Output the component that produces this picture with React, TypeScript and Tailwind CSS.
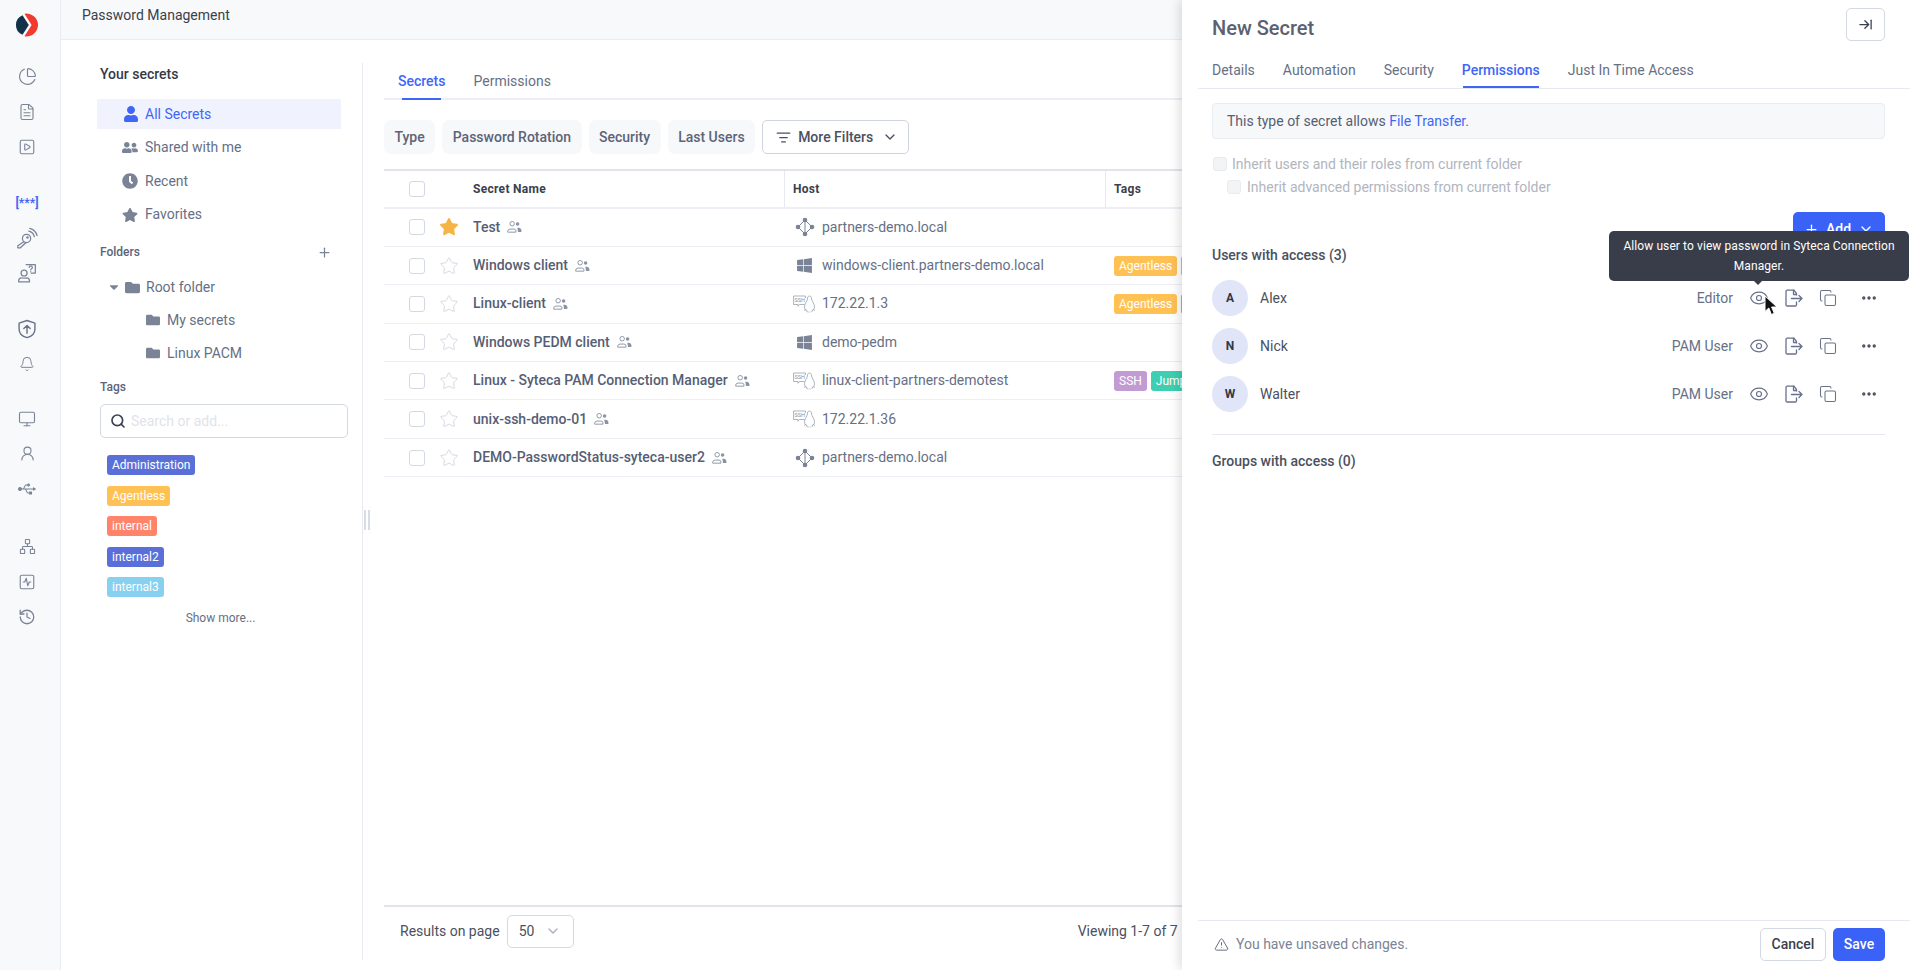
import React from 'react';
import {
  ArrowRightToLine,
  Bell,
  ChevronDown,
  Copy,
  Ellipsis,
  Eye,
  FileText,
  History,
  ListFilter,
  Monitor,
  Network,
  PieChart,
  Plus,
  Search,
  SquareActivity,
  SquarePlay,
  Star,
  TriangleAlert,
  UserRound,
} from 'lucide-react';
import { FaCaretDown, FaClock, FaFolder, FaStar, FaUser, FaUserFriends, FaUsb, FaWindows } from 'react-icons/fa';

function Logo() {
  return (
    <svg width="24" height="24" viewBox="0 0 24 24">
      <path d="M7.500 2.200A10.600 10.600 0 0 0 7.500 21.800L13.800 12Z" fill="#12324a" />
      <path d="M9.500.8A11.400 11.400 0 1 1 9.500 23.200L16.600 12Z" fill="#f23b2f" />
    </svg>
  );
}

function KeySignal() {
  return (
    <svg width="22" height="22" viewBox="0 0 24 24" fill="none" stroke="#7b8496" strokeWidth="1.400" strokeLinecap="round" strokeLinejoin="round">
      <circle cx="11.500" cy="12.500" r="4.500" />
      <path d="M8.500 16 2 20.500v2.200h2.800L11 17" />
      <circle cx="12.500" cy="11.500" r=".7" />
      <path d="M14 4.500A8 8 0 0 1 20 10.500" />
      <path d="M15 1.500A11 11 0 0 1 23 9.500" />
    </svg>
  );
}

function UserHelp() {
  return (
    <svg width="20" height="20" viewBox="0 0 24 24" fill="none" stroke="#7b8496" strokeWidth="1.500" strokeLinecap="round" strokeLinejoin="round">
      <circle cx="8.500" cy="12" r="3.600" />
      <path d="M2 22.500v-1.200a3.500 3.500 0 0 1 3.500-3.300h6a3.500 3.500 0 0 1 3.500 3.300v1.200z" />
      <path d="M11 2h11v10h-5" />
      <path d="M14.600 5.200a1.900 1.900 0 1 1 2.600 2c-.5.3-.7.5-.7 1" />
      <path d="M16.500 10.400v.1" />
    </svg>
  );
}

function ShieldUp() {
  return (
    <svg width="20" height="20" viewBox="0 0 24 24" fill="none" stroke="#68728a" strokeWidth="1.700" strokeLinecap="round" strokeLinejoin="round">
      <path d="M12 1.800 21.500 5v7c0 5.200-4 9-9.500 10.400C6.500 21 2.500 17.200 2.500 12V5z" />
      <path d="M12 17V8M8.200 11.500 12 7.800l3.800 3.700" />
    </svg>
  );
}

function PeopleLock({ className = '' }: { className?: string }) {
  return (
    <svg className={className} width="15" height="14" viewBox="0 0 16 14" fill="none" stroke="#8a92a3" strokeWidth="1">
      <circle cx="5.500" cy="3.500" r="2.400" />
      <path d="M.7 12.500v-1a2.600 2.600 0 0 1 2.600-2.300h3.900c1 0 1.800.4 2.300 1.200V12.500z" />
      <circle cx="11.300" cy="3.700" r="1.900" fill="#8a92a3" stroke="none" />
      <path d="M11 7.800h1.500c1.500 0 2.800 1.200 2.800 2.700v1.800h-3.500" fill="#8a92a3" stroke="none" />
    </svg>
  );
}

function DomainIcon() {
  return (
    <svg width="20" height="20" viewBox="0 0 20 20" fill="#7b8496" stroke="#7b8496">
      <path d="M10 3 3 10l7 7 7-7zM10 3v14" fill="none" strokeWidth="1" />
      <circle cx="10" cy="3" r="2.300" stroke="none" />
      <circle cx="3" cy="10" r="2.300" stroke="none" />
      <circle cx="17" cy="10" r="2.300" stroke="none" />
      <circle cx="10" cy="17" r="2.300" stroke="none" />
    </svg>
  );
}

function SshLinuxIcon() {
  return (
    <svg width="23" height="18" viewBox="0 0 23 18" fill="none" stroke="#8a92a3" strokeWidth=".7" strokeLinejoin="round">
      <path d="M11.500 9.500H6.500L5 11.200V9.500H.6V1h11.800v2" />
      <text x="1.500" y="7" fontSize="5.500" fill="#8a92a3" stroke="none" fontFamily="Roboto, sans-serif">SSH</text>
      <path d="M16.500 1c-1.500 0-2.100 1.400-2.100 3 0 2-2.900 4.500-2.900 7.800 0 1.200.4 2.300 1 3M16.500 1c1.500 0 2.100 1.400 2.100 3 0 2 2.900 4.500 2.900 7.800 0 1.200-.4 2.300-1 3" />
      <path d="M11 15.800c.8-.9 1.600-1.300 2.500-.9l.6 2M22 15.800c-.8-.9-1.600-1.300-2.500-.9l-.6 2" />
      <path d="M14.500 17h4" strokeDasharray="1 1" />
    </svg>
  );
}

function FileExport() {
  return (
    <svg width="19" height="19" viewBox="0 0 19 19" fill="none" stroke="#68728a" strokeWidth="1.300" strokeLinecap="round" strokeLinejoin="round">
      <path d="M12.500 6V4.500L10 1.200H3.200A1.200 1.200 0 0 0 2 2.400v13.400A1.200 1.200 0 0 0 3.200 17h8a1.200 1.200 0 0 0 1.300-1.200V13" />
      <path d="M9.500 1.200V5.500h3" />
      <path d="M7.500 9.500H18M15 6.500l3 3-3 3" />
    </svg>
  );
}

function Cursor() {
  return (
    <svg className="absolute left-[582px] top-[295px]" width="14" height="22" viewBox="0 0 14 22">
      <path d="M1 1v15.500l3.800-3.500 2.600 6.500 2.900-1.200-2.700-6.300H13z" fill="#111" stroke="#fff" strokeWidth="1" />
    </svg>
  );
}

const railGroups = [
  { top: 'mt-[22px]', items: [<PieChart key="a" size={19} strokeWidth={1.500} />, <FileText key="b" size={18} strokeWidth={1.500} />, <SquarePlay key="c" size={18} strokeWidth={1.500} />] },
  { top: 'mt-[21px]', items: [<span key="a" className="text-[12px] font-bold text-[#3f66f7]">[***]</span>, <KeySignal key="b" />, <UserHelp key="c" />] },
  { top: 'mt-[21px]', items: [<ShieldUp key="a" />, <Bell key="b" size={16} strokeWidth={1.500} />] },
  { top: 'mt-[20px]', items: [<Monitor key="a" size={18} strokeWidth={1.500} />, <UserRound key="b" size={17} strokeWidth={1.500} />, <FaUsb key="c" size={18} />] },
  { top: 'mt-[23px]', items: [<Network key="a" size={17} strokeWidth={1.500} />, <SquareActivity key="b" size={18} strokeWidth={1.500} />, <History key="c" size={18} strokeWidth={1.700} />] },
];

const pills = [
  { label: 'Administration', bg: 'bg-[#5a70d8]' },
  { label: 'Agentless', bg: 'bg-[#ffc154]' },
  { label: 'internal', bg: 'bg-[#ff8469]' },
  { label: 'internal2', bg: 'bg-[#5a70d8]' },
  { label: 'internal3', bg: 'bg-[#88d0f0]' },
];

type Kind = 'domain' | 'windows' | 'ssh';

// the second tag of some rows sits under the panel, only its edge shows
const rows: { name: string; host: string; kind: Kind; tags?: { label: string; bg: string }[]; fav?: boolean }[] = [
  { name: 'Test', host: 'partners-demo.local', kind: 'domain', fav: true },
  { name: 'Windows client', host: 'windows-client.partners-demo.local', kind: 'windows', tags: [{ label: 'Agentless', bg: 'bg-[#ffc154]' }, { label: '', bg: 'w-10 bg-[#88d0f0]' }] },
  { name: 'Linux-client', host: '172.22.1.3', kind: 'ssh', tags: [{ label: 'Agentless', bg: 'bg-[#ffc154]' }, { label: '', bg: 'w-10 bg-[#c39bd3]' }] },
  { name: 'Windows PEDM client', host: 'demo-pedm', kind: 'windows' },
  { name: 'Linux - Syteca PAM Connection Manager', host: 'linux-client-partners-demotest', kind: 'ssh', tags: [{ label: 'SSH', bg: 'bg-[#c39bd3]' }, { label: 'Jump', bg: 'bg-[#3ecfb2]' }] },
  { name: 'unix-ssh-demo-01', host: '172.22.1.36', kind: 'ssh' },
  { name: 'DEMO-PasswordStatus-syteca-user2', host: 'partners-demo.local', kind: 'domain' },
];

const users = [
  { initial: 'A', name: 'Alex', role: 'Editor' },
  { initial: 'N', name: 'Nick', role: 'PAM User' },
  { initial: 'W', name: 'Walter', role: 'PAM User' },
];

function Checkbox({ className = '' }: { className?: string }) {
  return <span className={`block h-4 w-4 shrink-0 rounded-[3px] border border-[#d3d8e2] bg-white ${className}`} />;
}

function HostIcon({ kind }: { kind: Kind }) {
  if (kind === 'domain') return <DomainIcon />;
  if (kind === 'windows') return <FaWindows size={17} color="#7b8496" />;
  return <SshLinuxIcon />;
}

function SidePanel() {
  const nav = [
    { label: 'Shared with me', icon: <FaUserFriends size={17} /> },
    { label: 'Recent', icon: <FaClock size={16} /> },
    { label: 'Favorites', icon: <FaStar size={16} /> },
  ];
  return (
    <aside className="relative mt-[23px] mb-[10px] w-[302px] shrink-0 border-r border-[#e6e9ef] pl-9 pr-[14px]">
      <div className="ml-[3px] flex h-[22px] items-center text-[14px] font-medium text-[#353a47]">Your secrets</div>
      <div className="mt-[14px] flex flex-col gap-[3.500px]">
        <div className="flex h-[30px] w-[244px] items-center gap-[6px] bg-[#f0f3fe] pl-[26px] text-[14px] text-[#3f66f7]">
          <FaUser size={16} />
          <span>All Secrets</span>
        </div>
        {nav.map((item) => (
          <div key={item.label} className="flex h-[30px] items-center gap-[7px] pl-[25px] text-[14px] text-[#667085]">
            <span className="flex w-4 justify-center text-[#7b8496]">{item.icon}</span>
            <span>{item.label}</span>
          </div>
        ))}
      </div>
      <div className="ml-[3px] mt-[12.500px] flex h-5 w-[232px] items-center justify-between text-[12px] font-medium text-[#5c6478]">
        <span>Folders</span>
        <Plus size={15} color="#7b8496" />
      </div>
      <div className="mt-[8.500px] flex flex-col text-[14px] text-[#667085]">
        <div className="flex h-[33px] items-center pl-[10px]">
          <FaCaretDown size={14} color="#7b8496" />
          <FaFolder size={15} color="#7b8496" className="ml-[4px]" />
          <span className="ml-[6px]">Root folder</span>
        </div>
        <div className="flex h-[33px] items-center pl-[49px]">
          <FaFolder size={14} color="#7b8496" />
          <span className="ml-[7px]">My secrets</span>
        </div>
        <div className="flex h-[33px] items-center pl-[49px]">
          <FaFolder size={14} color="#7b8496" />
          <span className="ml-[7px]">Linux PACM</span>
        </div>
      </div>
      <div className="ml-[3px] mt-[7.500px] flex h-5 items-center text-[12px] font-medium text-[#5c6478]">Tags</div>
      <div className="ml-[3px] mt-[7px] flex h-[34px] w-[248px] items-center gap-[5px] rounded-[5px] border border-[#d3d8e2] pl-[9px] text-[14px] text-[#dfe3ea]">
        <Search size={16} color="#3b4252" strokeWidth={2.500} />
        <span>Search or add...</span>
      </div>
      <div className="ml-[10px] mt-[17px] flex flex-col items-start gap-[10.500px]">
        {pills.map((pill) => (
          <span key={pill.label} className={`flex h-5 items-center rounded-[3px] px-[5px] text-[12px] text-white ${pill.bg}`}>
            {pill.label}
          </span>
        ))}
      </div>
      <div className="flex h-10 w-[244px] items-center justify-center pl-[3px] pt-[1px] text-[12px] text-[#667085]">Show more...</div>
      <span className="absolute right-[-8px] top-[447px] flex h-[20px] gap-[2px]">
        <span className="w-[2px] bg-[#d8dce4]" />
        <span className="w-[2px] bg-[#d8dce4]" />
      </span>
    </aside>
  );
}

function SecretsTable() {
  return (
    <div className="mt-[15px] flex-1 border-t-2 border-[#e0e3ea]">
      <div className="flex h-[37.500px] items-stretch border-b-2 border-[#eceef3] text-[12px] font-bold tracking-[0.3px] text-[#3a3f4c]">
        <div className="flex w-[400px] items-center pl-[25px]">
          <Checkbox />
          <span className="ml-[48px]">Secret Name</span>
        </div>
        <div className="flex w-[321px] items-center border-l border-[#e6e9ef] pl-[8px]">Host</div>
        <div className="flex flex-1 items-center border-l border-[#e6e9ef] pl-[8px]">Tags</div>
      </div>
      {rows.map((row) => (
        <div key={row.name} className="flex h-[38.400px] items-center border-b border-[#eceef3] text-[14px]">
          <div className="flex w-[400px] items-center pl-[25px]">
            <Checkbox />
            {row.fav ? (
              <Star size={20} className="ml-[14px]" fill="#f5b544" stroke="#f5b544" strokeWidth={1.500} />
            ) : (
              <Star size={20} className="ml-[14px]" stroke="#d6dae3" strokeWidth={1.200} />
            )}
            <span className="ml-[14px] font-medium text-[#565e74]">{row.name}</span>
            <PeopleLock className="ml-[7px]" />
          </div>
          <div className="flex w-[321px] items-center pl-[9px] text-[#667085]">
            <span className="flex w-[23px] justify-center">
              <HostIcon kind={row.kind} />
            </span>
            <span className="ml-[6px]">{row.host}</span>
          </div>
          <div className="flex items-center gap-[4px] pl-[9px]">
            {row.tags?.map((tag, i) => (
              <span key={i} className={`flex h-5 items-center rounded-[3px] px-[5px] text-[12px] text-white ${tag.bg}`}>
                {tag.label}
              </span>
            ))}
          </div>
        </div>
      ))}
    </div>
  );
}

function MainPane() {
  const chips = ['Type', 'Password Rotation', 'Security', 'Last Users'];
  return (
    <main className="ml-[21px] mt-[23px] mb-[10px] flex min-w-0 flex-1 flex-col">
      <div className="flex h-[37px] gap-[28px] border-b-2 border-[#eceef3] pl-[14px] text-[14px]">
        <div className="relative flex h-[36px] items-center font-medium text-[#3f66f7]">
          Secrets
          <span className="absolute inset-x-[4px] bottom-[-1px] h-[2px] bg-[#3f66f7]" />
        </div>
        <div className="flex h-[36px] items-center text-[#667085]">Permissions</div>
      </div>
      <div className="mt-[20px] flex h-[34px] gap-[7px] text-[14px] font-medium text-[#5c6478]">
        {chips.map((chip) => (
          <span key={chip} className="flex items-center rounded-[7px] bg-[#f7f8fa] px-[10.500px]">{chip}</span>
        ))}
        <span className="flex w-[147px] items-center gap-[7px] rounded-[5px] border border-[#cfd4de] pl-[13px] text-[#4a5060]">
          <ListFilter size={15} />
          More Filters
          <ChevronDown size={16} className="ml-[2px]" />
        </span>
      </div>
      <SecretsTable />
      <div className="flex h-[55px] items-center border-t-2 border-[#e0e3ea] pb-[5px] pl-4 text-[14px] text-[#4a5060]">
        <span>Results on page</span>
        <span className="ml-[7px] flex h-[33px] w-[67px] items-center rounded-[5px] border border-[#d3d8e2] pl-[11px]">
          50
          <ChevronDown size={16} color="#a9aeb9" className="ml-[11px]" />
        </span>
        <span className="ml-[504px]">Viewing 1-7 of 7</span>
      </div>
    </main>
  );
}

function AccessRow({ initial, name, role }: { initial: string; name: string; role: string }) {
  return (
    <div className="flex h-9 items-center text-[14px]">
      <span className="flex h-9 w-9 items-center justify-center rounded-full bg-[#e1e5f8] text-[12px] font-bold text-[#333848]">{initial}</span>
      <span className="ml-3 text-[#4a5060]">{name}</span>
      <span className="ml-auto text-[#667085]">{role}</span>
      <span className="ml-[17px] flex w-[18px] justify-center"><Eye size={20} color="#68728a" strokeWidth={1.400} className="shrink-0" /></span>
      <span className="ml-4 flex w-[19px] justify-center"><FileExport /></span>
      <span className="ml-[16px] flex w-[18px] justify-center"><Copy size={18} color="#68728a" strokeWidth={1.400} /></span>
      <span className="ml-[23px] mr-[7px] flex w-[18px] justify-center"><Ellipsis size={18} color="#4a5060" strokeWidth={2.500} /></span>
    </div>
  );
}

function SecretPanel() {
  const tabs = ['Details', 'Automation', 'Security', 'Permissions', 'Just In Time Access'];
  return (
    <section className="absolute inset-y-0 left-[1182px] right-0 flex flex-col bg-white shadow-[-3px_0_10px_rgba(0,0,0,0.13)]">
      <div className="flex h-[56px] justify-between pl-[30px] pr-[25px]">
        <h1 className="mt-[15px] text-[20px] font-medium leading-[26px] text-[#5c6170]">New Secret</h1>
        <span className="mt-2 flex h-[33px] w-[39px] items-center justify-center rounded-[5px] border border-[#d3d8e2]">
          <ArrowRightToLine size={15} color="#3a3f4c" />
        </span>
      </div>
      <div className="ml-4 flex h-[33px] gap-[28px] border-b border-[#e6e9ef] pl-[14px] text-[14px] text-[#667085]">
        {tabs.map((tab) => (
          tab === 'Permissions' ? (
            <div key={tab} className="relative flex h-[29px] items-center font-medium text-[#3f66f7]">
              {tab}
              <span className="absolute inset-x-[1px] top-[30px] h-[2px] bg-[#3f66f7]" />
            </div>
          ) : (
            <div key={tab} className="flex h-[29px] items-center">{tab}</div>
          )
        ))}
      </div>
      <div className="flex-1 pl-[30px] pr-[25px]">
        <div className="mt-[14px] flex h-9 items-center rounded-[4px] border border-[#e9ecf1] bg-[#f7f8fa] pl-[14px] text-[14px] text-[#565e74]">
          This type of secret allows&nbsp;<span className="text-[#3f66f7]">File Transfer.</span>
        </div>
        <div className="mt-[14px] flex h-[22px] items-center gap-[5px] pl-[1px] text-[14px] text-[#b1b5be]">
          <span className="block h-[14px] w-[14px] rounded-[3px] border border-[#e9ebef] bg-[#f3f4f6]" />
          Inherit users and their roles from current folder
        </div>
        <div className="mt-[1px] flex h-[22px] items-center gap-[6px] pl-[15px] text-[14px] text-[#b1b5be]">
          <span className="block h-[14px] w-[14px] rounded-[3px] border border-[#e9ebef] bg-[#f3f4f6]" />
          Inherit advanced permissions from current folder
        </div>
        <div className="mt-[14px] flex justify-end">
          <span className="flex h-[34px] w-[92px] items-center justify-center gap-[7px] rounded-[5px] bg-[#3b62f6] text-[14px] font-medium text-white">
            <Plus size={15} />
            Add
            <ChevronDown size={16} />
          </span>
        </div>
        <h2 className="mt-[-1px] flex h-5 items-center text-[14px] font-medium text-[#4a5060]">Users with access (3)</h2>
        <div className="mt-[15px] flex flex-col gap-3">
          {users.map((user) => (
            <AccessRow key={user.initial} {...user} />
          ))}
        </div>
        <div className="mt-[22px] border-t border-[#e6e9ef]" />
        <h2 className="mt-[16px] flex h-5 items-center text-[14px] font-medium text-[#4a5060]">Groups with access (0)</h2>
      </div>
      <div className="ml-4 flex h-[50px] items-center border-t border-[#e6e9ef] pb-[2px] pl-4 pr-[25px] text-[14px] text-[#7b8496]">
        <TriangleAlert size={15} color="#5c6478" strokeWidth={1.500} />
        <span className="ml-[7px]">You have unsaved changes.</span>
        <span className="ml-auto flex h-[33px] w-[66px] items-center justify-center rounded-[5px] border border-[#d3d8e2] font-medium text-[#3a3f4c]">Cancel</span>
        <span className="ml-[7px] flex h-[33px] w-[52px] items-center justify-center rounded-[5px] bg-[#3b62f6] font-medium text-white">Save</span>
      </div>
      <div className="absolute left-[427px] top-[231px] w-[300px] rounded-[5px] bg-[#393d49] px-[10px] py-[5px] text-center text-[12px] leading-[20px] tracking-[0.09px] text-white">
        Allow user to view password in Syteca Connection Manager.
        <span className="absolute bottom-[-4px] left-[144px] h-0 w-0 border-x-[5px] border-t-[5px] border-x-transparent border-t-[#393d49]" />
      </div>
      <Cursor />
    </section>
  );
}

export default function App() {
  return (
    <div className="relative flex h-[970px] w-[1910px] overflow-hidden bg-white font-[Roboto,sans-serif]">
      <nav className="flex w-[61px] shrink-0 flex-col items-center border-r border-[#e9ecf1] bg-[#f7f9fb] pr-[6px] text-[#7b8496]">
        <div className="mt-[13px]"><Logo /></div>
        {railGroups.map((group, i) => (
          <div key={i} className={`flex w-full flex-col items-center ${group.top}`}>
            {group.items.map((icon, j) => (
              <span key={j} className="flex h-[35px] items-center justify-center">{icon}</span>
            ))}
          </div>
        ))}
      </nav>
      <div className="flex min-w-0 flex-1 flex-col">
        <header className="flex h-[40px] shrink-0 items-start border-b border-[#e9ecf1] bg-[#f7f9fb] pl-[21px] pt-[5px] text-[14px] text-[#3a3f4c]">
          Password Management
        </header>
        <div className="flex min-h-0 flex-1">
          <SidePanel />
          <MainPane />
        </div>
      </div>
      <SecretPanel />
    </div>
  );
}
